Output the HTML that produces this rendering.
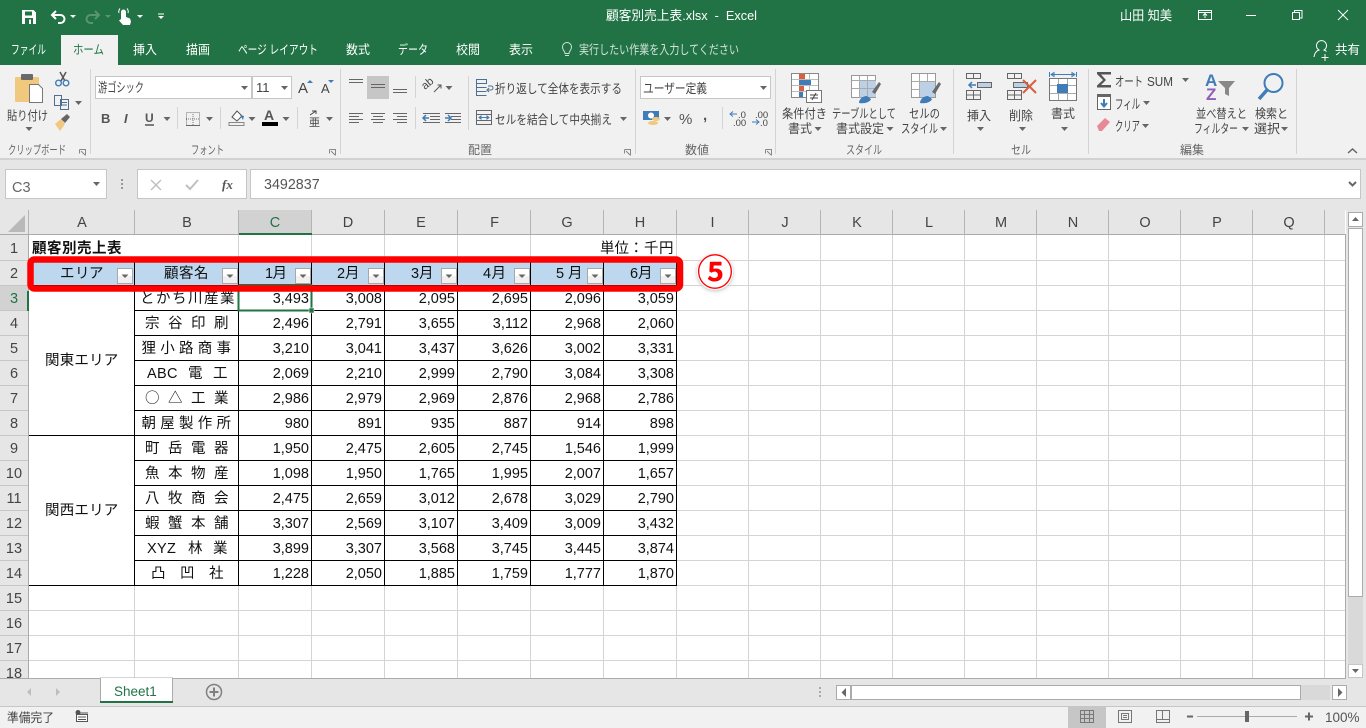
<!DOCTYPE html>
<html lang="ja"><head><meta charset="utf-8"><title>顧客別売上表.xlsx - Excel</title>
<style>
html,body{margin:0;padding:0;width:1366px;height:728px;overflow:hidden;background:#fff}
svg{display:block}
text{font-family:"Liberation Sans","Noto Sans CJK JP",sans-serif;font-size:12.5px;fill:#444;white-space:pre}
.w text{fill:#fff}
.g text{fill:#666;font-size:12px}
.h text{font-size:14.5px;fill:#444;text-anchor:middle}
.c text{font-size:14.5px;fill:#111}
.n text{font-size:14.5px;fill:#111;text-anchor:end}
</style></head><body>
<svg width="1366" height="728" viewBox="0 0 1366 728" xmlns="http://www.w3.org/2000/svg">
<defs>
<path id="k" d="M-3.5 0h7l-3.500 4z" fill="#666"/>
<path id="kw" d="M-3 0h6l-3 3z" fill="#fff"/>
<g id="f"><rect x=".5" y=".5" width="15" height="15" fill="#f0f0f0" stroke="#a8a8a8"/><rect x="1" y="1" width="14" height="7" fill="#fff"/><path d="M4.500 6.500h7l-3.500 3.500z" fill="#666"/></g>
<filter id="sh" x="-30%" y="-30%" width="160%" height="160%"><feGaussianBlur stdDeviation="1.500"/></filter>
</defs>

<!-- title + tabs -->
<rect width="1366" height="65" fill="#217346"/>
<rect y="65" width="1366" height="93" fill="#f1f1f1"/>
<rect y="158" width="1366" height="2" fill="#d2d2d2"/>
<rect y="160" width="1366" height="50" fill="#e6e6e6"/>
<rect x="61" y="35" width="57" height="30" fill="#f1f1f1"/>

<!-- QAT -->
<path d="M22 10h11.500l2.500 2.500V24H22z" fill="#fff"/><rect x="25" y="11.500" width="7" height="4" fill="#217346"/><rect x="25" y="18" width="8" height="6" fill="#217346"/><rect x="29" y="19.500" width="2" height="4.500" fill="#fff"/>
<path d="M56 11l-4 4 4 4M52 15h8.500a4 4 0 0 1 0 8H58" fill="none" stroke="#fff" stroke-width="2"/>
<use href="#kw" x="73" y="15"/>
<path d="M95 11l4 4-4 4M99 15h-8.500a4 4 0 0 0 0 8H93" fill="none" stroke="#5a9475" stroke-width="2"/>
<path d="M105 15h6l-3 3z" fill="#5a9475"/>
<path d="M121 19v-7a2.500 2.500 0 0 1 5 0v5l4 1.500 1 3-1 3.500h-7l-4-4.500z" fill="#fff"/><path d="M119 13a4.500 4.500 0 0 1 1-4.500M128 13a4.500 4.500 0 0 0-1-4.500" fill="none" stroke="#fff"/>
<use href="#kw" x="140" y="15"/>
<path d="M158 14h6" stroke="#fff"/><use href="#kw" x="161" y="16"/>

<g class="w">
<text x="606" y="20" style="font-size:13px" textLength="151" lengthAdjust="spacingAndGlyphs">顧客別売上表.xlsx  -  Excel</text>
<text x="1120" y="20" style="font-size:13px" textLength="52" lengthAdjust="spacingAndGlyphs">山田 知美</text>
<text x="11" y="54" textLength="35" lengthAdjust="spacingAndGlyphs">ファイル</text>
<text x="133" y="54" textLength="24" lengthAdjust="spacingAndGlyphs">挿入</text>
<text x="186" y="54" textLength="24" lengthAdjust="spacingAndGlyphs">描画</text>
<text x="238" y="54" textLength="80" lengthAdjust="spacingAndGlyphs">ページ レイアウト</text>
<text x="346" y="54" textLength="24" lengthAdjust="spacingAndGlyphs">数式</text>
<text x="398" y="54" textLength="30" lengthAdjust="spacingAndGlyphs">データ</text>
<text x="456" y="54" textLength="24" lengthAdjust="spacingAndGlyphs">校閲</text>
<text x="509" y="54" textLength="24" lengthAdjust="spacingAndGlyphs">表示</text>
<text x="1335" y="54" textLength="25" lengthAdjust="spacingAndGlyphs">共有</text>
</g>
<text x="73" y="54" textLength="31" lengthAdjust="spacingAndGlyphs" style="fill:#217346">ホーム</text>
<text x="579" y="54" textLength="160" lengthAdjust="spacingAndGlyphs" style="fill:#d3e3da">実行したい作業を入力してください</text>
<path d="M565 53.500c0-2.500-2.500-3-2.500-6.500a4.500 4.500 0 0 1 9 0c0 3.500-2.500 4-2.500 6.500zM565 55.500h4" fill="none" stroke="#d3e3da"/>
<!-- window buttons -->
<path d="M1198.500 10.500h13v9h-13zM1198.500 12.500h13M1205 18v-4M1203 15.500l2-2 2 2" fill="none" stroke="#fff"/>
<path d="M1246 15.500h10" stroke="#fff"/>
<path d="M1292.500 12.500h7v7h-7zM1294.500 12.500v-2h7.500v7.500h-2.500" fill="none" stroke="#fff"/>
<path d="M1338 10l10 10M1348 10l-10 10" stroke="#fff" fill="none"/>
<path d="M1314 57c.5-4 2-6 5-7a5 5 0 1 1 5 0c1 .3 1.800.8 2.500 1.500M1325 54v7M1321.500 57.500h7" fill="none" stroke="#fff"/>

<!-- ribbon separators -->
<path d="M90.500 69v85M340.500 69v85M635.500 69v85M775.500 69v85M953.500 69v85M1088.500 69v85M1296.500 69v85" stroke="#d4d4d4"/>
<path d="M177.500 107v22M220.500 107v22M297.500 107v22M415.500 76v22M415.500 107v22M468.500 76v54M722.500 107v22" stroke="#d4d4d4"/>

<!-- clipboard -->
<rect x="15" y="77" width="24" height="25" rx="1" fill="#f0c87e"/><rect x="21" y="74" width="12" height="6" rx="1" fill="#6a6a6a"/><path d="M29.500 84.500h9l4 4v14h-13z" fill="#fff" stroke="#777"/>
<path d="M60 72l5 9M66 72l-5 9" stroke="#555" stroke-width="1.500" fill="none"/><circle cx="58.500" cy="83" r="2.800" fill="none" stroke="#3f7cb8" stroke-width="1.400"/><circle cx="66" cy="83" r="2.800" fill="none" stroke="#3f7cb8" stroke-width="1.400"/>
<path d="M54.500 95.500h7v10h-7zM60.500 99.500h8v10h-8zM62 102.500h5M62 105h5" fill="#f1f1f1" stroke="#4f6f90"/><use href="#k" x="78.500" y="101"/>
<path d="M55 124l6-5 4 5-5 7z" fill="#f0c87e"/><path d="M61 119l6-5 3 3-5 6z" fill="#666"/>
<text x="7" y="120" textLength="41" lengthAdjust="spacingAndGlyphs">貼り付け</text><use href="#k" x="29" y="127"/>
<g class="g"><text x="8" y="154" textLength="58" lengthAdjust="spacingAndGlyphs">クリップボード</text>
<text x="191" y="154" textLength="33" lengthAdjust="spacingAndGlyphs">フォント</text>
<text x="468" y="154" textLength="24" lengthAdjust="spacingAndGlyphs">配置</text>
<text x="685" y="154" textLength="24" lengthAdjust="spacingAndGlyphs">数値</text>
<text x="846" y="154" textLength="36" lengthAdjust="spacingAndGlyphs">スタイル</text>
<text x="1011" y="154" textLength="20" lengthAdjust="spacingAndGlyphs">セル</text>
<text x="1180" y="154" textLength="24" lengthAdjust="spacingAndGlyphs">編集</text></g>
<path d="M79.500 149.500h6v6M79.500 149.500v4M81 151l4 4" fill="none" stroke="#888"/><path d="M329.500 149.500h6v6M329.500 149.500v4M331 151l4 4" fill="none" stroke="#888"/><path d="M624.500 149.500h6v6M624.500 149.500v4M626 151l4 4" fill="none" stroke="#888"/><path d="M765.500 149.500h6v6M765.500 149.500v4M767 151l4 4" fill="none" stroke="#888"/>

<!-- font -->
<rect x="95.500" y="76.500" width="156" height="22" fill="#fff" stroke="#c6c6c6"/><rect x="252.500" y="76.500" width="39" height="22" fill="#fff" stroke="#c6c6c6"/>
<text x="98" y="92" style="font-size:13px" textLength="46" lengthAdjust="spacingAndGlyphs">游ゴシック</text><use href="#k" x="244.500" y="86"/>
<text x="256" y="92" style="font-size:13px">11</text><use href="#k" x="284.500" y="86"/>
<text x="298" y="93" style="font-size:15px">A</text><path d="M307 83h6l-3-3z" fill="#3f7cb8"/>
<text x="321" y="93" style="font-size:13px">A</text><path d="M328 80h6l-3 3z" fill="#3f7cb8"/>
<text x="101" y="123" style="font-weight:700;font-size:13px;fill:#555">B</text>
<text x="124" y="123" style="font-style:italic;font-size:13px;font-weight:700;fill:#555">I</text>
<text x="145" y="122" style="font-weight:700;font-size:12px;fill:#555">U</text><path d="M145 125h9" stroke="#555" stroke-width="1.500"/><use href="#k" x="167" y="117"/>
<path d="M186.500 112.500h13v13h-13zM193 112v14M186 119h14" fill="none" stroke="#777" stroke-dasharray="1 1"/><path d="M186 125.500h14" stroke="#666"/><use href="#k" x="209.500" y="117"/>
<path d="M229 122.500h15v3h-15z" fill="none" stroke="#888"/><path d="M232 117l5-6 5 5-5 5z" fill="#fff" stroke="#555"/><path d="M240 115l4 1-1 4z" fill="#3f7cb8"/><use href="#k" x="252" y="117"/>
<text x="264" y="120" style="font-weight:700;font-size:14px;fill:#555">A</text><rect x="262" y="122" width="16" height="4" fill="#000"/><use href="#k" x="286" y="117"/>
<text x="309" y="126" style="font-size:11px">亜</text><path d="M310 115l6-4M312 111h4v3" fill="none" stroke="#444"/><use href="#k" x="329.500" y="117"/>

<!-- alignment -->
<rect x="367" y="76" width="22" height="23" fill="#c6c6c6"/>
<path d="M349 79.500h14M349 82.500h14M371 84.500h14M371 87.500h14M393 89.500h14M393 92.500h14M349 113.500h14M349 116.500h10M349 119.500h14M349 122.500h10M371 113.500h14M373 116.500h10M371 119.500h14M373 122.500h10M393 113.500h14M397 116.500h10M393 119.500h14M397 122.500h10" stroke="#666" fill="none"/>
<text transform="translate(425 90) rotate(-40)" style="font-size:11px">ab</text><path d="M434 92l7-7m-3.500 0h3.500v3.500" fill="none" stroke="#555"/><use href="#k" x="449" y="86"/>
<path d="M423 113.500h17M430 116.500h10M430 119.500h10M423 122.500h17M445 113.500h16M451 116.500h10M451 119.500h10M445 122.500h16" stroke="#666"/><path d="M429 118h-6m3-3l-3 3 3 3M445 118h6m-3-3l3 3-3 3" stroke="#3f7cb8" fill="none" stroke-width="1.500"/>
<path d="M476.500 79.500h10v4h-10zM476.500 87.500h10M476.500 91.500h10M476.500 79.500v16h10M488 86h3a2 2 0 0 1 0 4h-4m2-2l-2 2 2 2" stroke="#4f6f90" fill="none"/>
<text x="495" y="93" textLength="127" lengthAdjust="spacingAndGlyphs">折り返して全体を表示する</text>
<path d="M476.500 110.500h15v14h-15zM476.500 114.500h15M476.500 120.500h15" stroke="#666" fill="none"/><path d="M479 117.500h10M479 117.500l2-1.500v3zM489 117.500l-2-1.500v3z" stroke="#3f7cb8" fill="none"/>
<text x="495" y="124" textLength="117" lengthAdjust="spacingAndGlyphs">セルを結合して中央揃え</text><use href="#k" x="623.500" y="117"/>

<!-- number -->
<rect x="640.500" y="76.500" width="130" height="22" fill="#fff" stroke="#c6c6c6"/>
<text x="643" y="93" style="font-size:13px" textLength="64" lengthAdjust="spacingAndGlyphs">ユーザー定義</text><use href="#k" x="763.500" y="86"/>
<rect x="643" y="111" width="16" height="9" fill="#3f7cb8"/><circle cx="651" cy="115.500" r="3" fill="#fff"/><ellipse cx="653" cy="123" rx="5" ry="2" fill="#f0c87e"/><ellipse cx="656" cy="119" rx="4" ry="2" fill="#f0c87e"/><use href="#k" x="667.500" y="117"/>
<text x="679" y="124" style="font-size:15px;fill:#555">%</text>
<text x="703" y="120" style="font-size:15px;font-weight:700;fill:#555">,</text>
<text x="738" y="118" style="font-size:9.500px">.0</text><text x="733" y="126" style="font-size:9.500px">.00</text><path d="M737 114h-7m3-2.500l-3 2.500 3 2.500" stroke="#3f7cb8" fill="none"/>
<text x="755" y="118" style="font-size:9.500px">.00</text><text x="760" y="126" style="font-size:9.500px">.0</text><path d="M752 122h7m-3-2.500l3 2.500-3 2.500" stroke="#3f7cb8" fill="none"/>

<!-- styles -->
<rect x="791.500" y="73.500" width="27" height="24" fill="#fff" stroke="#888"/><path d="M800.500 74v23M809.500 74v23M792 79.500h26M792 85.500h26M792 91.500h26" stroke="#bbb"/><rect x="799" y="74" width="6" height="5" fill="#d85f3f"/><rect x="799" y="80" width="12" height="5" fill="#3f7cb8"/><rect x="799" y="86" width="5" height="5" fill="#d85f3f"/><rect x="799" y="92" width="4" height="5" fill="#3f7cb8"/><rect x="806.500" y="90.500" width="15" height="12" fill="#fff" stroke="#777"/><path d="M810 95h8M810 98h8M816 93l-4 7" stroke="#444" fill="none"/>
<rect x="851.500" y="75.500" width="24" height="22" fill="#fff" stroke="#999"/><rect x="859" y="80" width="17" height="17" fill="#bcd0e6"/><path d="M859.500 76v22M867.500 76v22M852 80.500h24M852 88.500h24" stroke="#aaa"/><path d="M872 92l7-10 2 2-6 10z" fill="#6a6a6a"/><path d="M859 103c0-4 4-7 8-7l4 3c-1 3-6 5-12 4z" fill="#3f7cb8"/>
<rect x="911.500" y="73.500" width="24" height="24" fill="#fff" stroke="#999"/><path d="M919.500 74v23M927.500 74v23M912 81.500h23M912 89.500h23" stroke="#aaa"/><rect x="920" y="82" width="15" height="15" fill="#bcd0e6"/><path d="M932 92l7-10 2 2-6 10z" fill="#6a6a6a"/><path d="M920 103c0-4 4-7 8-7l4 3c-1 3-6 5-12 4z" fill="#3f7cb8"/>
<text x="782" y="118" textLength="45" lengthAdjust="spacingAndGlyphs">条件付き</text>
<text x="788" y="133" textLength="24" lengthAdjust="spacingAndGlyphs">書式</text><use href="#k" x="818" y="127"/>
<text x="832" y="118" textLength="64" lengthAdjust="spacingAndGlyphs">テーブルとして</text>
<text x="836" y="133" textLength="48" lengthAdjust="spacingAndGlyphs">書式設定</text><use href="#k" x="890" y="127"/>
<text x="909" y="118" textLength="31" lengthAdjust="spacingAndGlyphs">セルの</text>
<text x="901" y="133" textLength="37" lengthAdjust="spacingAndGlyphs">スタイル</text><use href="#k" x="943.500" y="127"/>

<!-- cells -->
<path d="M966.500 73.500h14v5h-14zM973.500 74v5M977.500 82.500h14v5h-14zM984.500 83v4M966.500 90.500h14v9h-14zM966.500 95h14M973.500 91v8" fill="none" stroke="#666"/><rect x="978" y="83" width="13" height="4" fill="#bcd0e6"/><path d="M976 85h-7m3-3l-3 3 3 3" fill="none" stroke="#3f7cb8" stroke-width="1.500"/>
<path d="M1007.500 73.500h14v5h-14zM1014.500 74v5M1013.500 82.500h14v5h-14zM1007.500 90.500h14v9h-14zM1007.500 95h14M1014.500 91v8" fill="none" stroke="#666"/><rect x="1014" y="83" width="13" height="4" fill="#bcd0e6"/><path d="M1023 80l13 13M1036 80l-13 13" stroke="#d85f3f" stroke-width="2"/>
<rect x="1049.500" y="78.500" width="27" height="22" fill="#fff" stroke="#777"/><path d="M1058.500 79v21M1067.500 79v21M1050 85.500h26M1050 93.500h26" stroke="#aaa"/><rect x="1057" y="84" width="11" height="9" fill="#3f7cb8"/><path d="M1049.500 72v5M1076.500 72v5M1051 74.500h24M1051 74.500l3-2v4zM1075 74.500l-3-2v4z" stroke="#3f7cb8" fill="none"/>
<text x="967" y="120" textLength="24" lengthAdjust="spacingAndGlyphs">挿入</text><use href="#k" x="980.500" y="127"/>
<text x="1009" y="120" textLength="24" lengthAdjust="spacingAndGlyphs">削除</text><use href="#k" x="1022.500" y="127"/>
<text x="1051" y="118" textLength="24" lengthAdjust="spacingAndGlyphs">書式</text><use href="#k" x="1064.500" y="127"/>

<!-- edit -->
<path d="M1097 72h14v2.500h-10l5 5.500-5 5h10v2.500h-14v-2l6-5.500-6-6z" fill="#555"/>
<text x="1115" y="86" style="font-size:13px" textLength="28" lengthAdjust="spacingAndGlyphs">オート</text><text x="1147" y="86" style="font-size:13px" textLength="26" lengthAdjust="spacingAndGlyphs">SUM</text><use href="#k" x="1185.500" y="78"/>
<rect x="1097.500" y="94.500" width="13" height="15" fill="#fff" stroke="#666"/><rect x="1097" y="94" width="14" height="3" fill="#666"/><path d="M1104 99v7m-3-3l3 3.500 3-3.500" fill="none" stroke="#3f7cb8" stroke-width="2"/>
<text x="1115" y="109" style="font-size:13.500px" textLength="25" lengthAdjust="spacingAndGlyphs">フィル</text><use href="#k" x="1146.500" y="101"/>
<path d="M1097 126l8-8 5 4-8 9h-3z" fill="#e8899a"/>
<text x="1115" y="131" style="font-size:13.500px" textLength="25" lengthAdjust="spacingAndGlyphs">クリア</text><use href="#k" x="1145.500" y="124"/>
<text x="1205" y="86" style="font-size:17px;font-weight:700;fill:#3f7cb8">A</text><text x="1206" y="100" style="font-size:17px;font-weight:700;fill:#8f5fb5">Z</text>
<path d="M1218 81h17l-6 7v8l-4-2v-6z" fill="#888"/>
<circle cx="1273.500" cy="83" r="9" fill="#f1f1f1" stroke="#3f7cb8" stroke-width="2"/><path d="M1267 90l-8 9" stroke="#3f7cb8" stroke-width="3.500"/>
<text x="1196" y="118" textLength="51" lengthAdjust="spacingAndGlyphs">並べ替えと</text>
<text x="1194" y="133" textLength="44" lengthAdjust="spacingAndGlyphs">フィルター</text><use href="#k" x="1245.500" y="127"/>
<text x="1255" y="118" textLength="33" lengthAdjust="spacingAndGlyphs">検索と</text>
<text x="1254" y="133" textLength="26" lengthAdjust="spacingAndGlyphs">選択</text><use href="#k" x="1284.500" y="127"/>
<path d="M1348 153l4.500-4 4.500 4" fill="none" stroke="#666" stroke-width="1.500"/>

<!-- formula bar -->
<rect x="5.500" y="169.500" width="101" height="29" fill="#fff" stroke="#c6c6c6"/>
<text x="12" y="192" style="font-size:14.500px;fill:#666">C3</text><use href="#k" x="96.500" y="182"/>
<path d="M122 179v2M122 183v2M122 187v2" stroke="#999" stroke-width="2"/>
<rect x="137.500" y="169.500" width="109" height="29" fill="#fff" stroke="#c6c6c6"/>
<path d="M151 180l10 10M161 180l-10 10" stroke="#c0c0c0" stroke-width="1.500"/>
<path d="M186 185l4 4 8-9" fill="none" stroke="#c0c0c0" stroke-width="2"/>
<text x="222" y="189" style="font:italic 700 13px 'Liberation Serif',serif;fill:#555">fx</text>
<rect x="250.500" y="169.500" width="1110" height="29" fill="#fff" stroke="#c6c6c6"/>
<text x="264" y="189" style="font-size:14.300px;fill:#555">3492837</text>
<path d="M1349 182l3.500 3.500 3.500-3.500" fill="none" stroke="#666" stroke-width="2"/>

<!-- headers -->
<rect y="210" width="1345" height="25" fill="#e6e6e6"/>
<rect y="235" width="28" height="443" fill="#e6e6e6"/>
<rect x="239" y="210" width="73" height="25" fill="#d2d2d2"/>
<rect y="286" width="28" height="25" fill="#d2d2d2"/>
<path d="M8 232l17-17v17z" fill="#b9b9b9"/>
<path d="M28.500 210v25M134.500 210v25M238.500 210v25M311.500 210v25M384.500 210v25M457.500 210v25M530.500 210v25M603.500 210v25M676.500 210v25M748.500 210v25M820.500 210v25M892.500 210v25M964.500 210v25M1036.500 210v25M1108.500 210v25M1180.500 210v25M1252.500 210v25M1324.500 210v25" stroke="#b4b4b4"/>
<path d="M0 260.500h28M0 285.500h28M0 310.500h28M0 335.500h28M0 360.500h28M0 385.500h28M0 410.500h28M0 435.500h28M0 460.500h28M0 485.500h28M0 510.500h28M0 535.500h28M0 560.500h28M0 585.500h28M0 610.500h28M0 635.500h28M0 660.500h28" stroke="#c6c6c6"/>
<g class="h"><text x="82" y="227">A</text><text x="187" y="227">B</text><text x="275" y="227" style="fill:#217346">C</text><text x="348" y="227">D</text><text x="421" y="227">E</text><text x="494.500" y="227">F</text><text x="567" y="227">G</text><text x="640" y="227">H</text><text x="712.500" y="227">I</text><text x="785" y="227">J</text><text x="857" y="227">K</text><text x="929" y="227">L</text><text x="1001" y="227">M</text><text x="1073" y="227">N</text><text x="1145" y="227">O</text><text x="1217" y="227">P</text><text x="1289" y="227">Q</text>
<text x="14" y="253">1</text><text x="14" y="278">2</text><text x="14" y="303" style="fill:#217346">3</text><text x="14" y="328">4</text><text x="14" y="353">5</text><text x="14" y="378">6</text><text x="14" y="403">7</text><text x="14" y="428">8</text><text x="14" y="453">9</text><text x="14" y="478">10</text><text x="14" y="503">11</text><text x="14" y="528">12</text><text x="14" y="553">13</text><text x="14" y="578">14</text><text x="14" y="603">15</text><text x="14" y="628">16</text><text x="14" y="653">17</text><text x="14" y="678">18</text></g>

<!-- grid -->
<rect x="29" y="235" width="1316" height="443" fill="#fff"/>
<path d="M29 260.500H1345M29 285.500H1345M29 310.500H1345M29 335.500H1345M29 360.500H1345M29 385.500H1345M29 410.500H1345M29 435.500H1345M29 460.500H1345M29 485.500H1345M29 510.500H1345M29 535.500H1345M29 560.500H1345M29 585.500H1345M29 610.500H1345M29 635.500H1345M29 660.500H1345" stroke="#d4d4d4"/>
<path d="M134.500 260V678M238.500 235V678M311.500 235V678M384.500 235V678M457.500 235V678M530.500 235V678M603.500 260V678M676.500 235V678M748.500 235V678M820.500 235V678M892.500 235V678M964.500 235V678M1036.500 235V678M1108.500 235V678M1180.500 235V678M1252.500 235V678M1324.500 235V678" stroke="#d4d4d4"/>
<rect x="29" y="286" width="105" height="149" fill="#fff"/><rect x="29" y="436" width="105" height="149" fill="#fff"/>
<rect x="29" y="261" width="647" height="24" fill="#bdd7ee"/>
<path d="M134.500 261V585M238.500 261V585M311.500 261V585M384.500 261V585M457.500 261V585M530.500 261V585M603.500 261V585M676.500 261V585" stroke="#000"/>
<path d="M29 285.500H677M134 310.500H677M134 335.500H677M134 360.500H677M134 385.500H677M134 410.500H677M29 435.500H677M134 460.500H677M134 485.500H677M134 510.500H677M134 535.500H677M134 560.500H677M29 585.500H677" stroke="#000"/>
<path d="M28.500 235V678M0 234.500H1345M1345.500 234V679M29 678.500H1345" stroke="#ababab"/>
<rect x="239" y="233" width="73" height="2" fill="#217346"/>
<rect x="27" y="291" width="2" height="20" fill="#217346"/>

<!-- text cells -->
<g class="c">
<text x="32 47 62 77 92 107" y="253" style="font-weight:700">顧客別売上表</text>
<text x="600 614.500 629 644 659" y="253">単位：千円</text>
<text x="60 75 89" y="278">エリア</text>
<text x="164 179 194" y="278">顧客名</text>
<text x="265 272.500" y="278">1月</text><text x="337 345" y="278">2月</text><text x="411 419" y="278">3月</text><text x="483 491.500" y="278">4月</text><text x="556 568" y="278">5月</text><text x="630 638" y="278">6月</text>
<text x="45 59.700 74.400 89.100 103.800" y="365">関東エリア</text>
<text x="45 59.700 74.400 89.100 103.800" y="515">関西エリア</text>
<text x="140 156 172 188 204 220" y="303">とかち川産業</text>
<text x="145 168 191 214" y="328">宗谷印刷</text>
<text x="141.500 160.250 179 197.750 216.500" y="353">狸小路商事</text>
<text x="147 157 167 188 213" y="378">ABC電工</text>
<text x="145 168 191 214" y="403" style="font-family:'Noto Sans CJK JP',sans-serif">○△工業</text>
<text x="141.500 160.250 179 197.750 216.500" y="428">朝屋製作所</text>
<text x="145 168 191 214" y="453">町岳電器</text>
<text x="145 168 191 214" y="478">魚本物産</text>
<text x="145 168 191 214" y="503">八牧商会</text>
<text x="145 168 191 214" y="528">蝦蟹本舗</text>
<text x="147 157 167 188 213" y="553">XYZ林業</text>
<text x="151 180 209" y="578">凸凹社</text>
</g>
<g class="n">
<text x="309" y="303">3,493</text><text x="382" y="303">3,008</text><text x="455" y="303">2,095</text><text x="528" y="303">2,695</text><text x="601" y="303">2,096</text><text x="674" y="303">3,059</text>
<text x="309" y="328">2,496</text><text x="382" y="328">2,791</text><text x="455" y="328">3,655</text><text x="528" y="328">3,112</text><text x="601" y="328">2,968</text><text x="674" y="328">2,060</text>
<text x="309" y="353">3,210</text><text x="382" y="353">3,041</text><text x="455" y="353">3,437</text><text x="528" y="353">3,626</text><text x="601" y="353">3,002</text><text x="674" y="353">3,331</text>
<text x="309" y="378">2,069</text><text x="382" y="378">2,210</text><text x="455" y="378">2,999</text><text x="528" y="378">2,790</text><text x="601" y="378">3,084</text><text x="674" y="378">3,308</text>
<text x="309" y="403">2,986</text><text x="382" y="403">2,979</text><text x="455" y="403">2,969</text><text x="528" y="403">2,876</text><text x="601" y="403">2,968</text><text x="674" y="403">2,786</text>
<text x="309" y="428">980</text><text x="382" y="428">891</text><text x="455" y="428">935</text><text x="528" y="428">887</text><text x="601" y="428">914</text><text x="674" y="428">898</text>
<text x="309" y="453">1,950</text><text x="382" y="453">2,475</text><text x="455" y="453">2,605</text><text x="528" y="453">2,745</text><text x="601" y="453">1,546</text><text x="674" y="453">1,999</text>
<text x="309" y="478">1,098</text><text x="382" y="478">1,950</text><text x="455" y="478">1,765</text><text x="528" y="478">1,995</text><text x="601" y="478">2,007</text><text x="674" y="478">1,657</text>
<text x="309" y="503">2,475</text><text x="382" y="503">2,659</text><text x="455" y="503">3,012</text><text x="528" y="503">2,678</text><text x="601" y="503">3,029</text><text x="674" y="503">2,790</text>
<text x="309" y="528">3,307</text><text x="382" y="528">2,569</text><text x="455" y="528">3,107</text><text x="528" y="528">3,409</text><text x="601" y="528">3,009</text><text x="674" y="528">3,432</text>
<text x="309" y="553">3,899</text><text x="382" y="553">3,307</text><text x="455" y="553">3,568</text><text x="528" y="553">3,745</text><text x="601" y="553">3,445</text><text x="674" y="553">3,874</text>
<text x="309" y="578">1,228</text><text x="382" y="578">2,050</text><text x="455" y="578">1,885</text><text x="528" y="578">1,759</text><text x="601" y="578">1,777</text><text x="674" y="578">1,870</text>
</g>

<!-- filter buttons -->
<use href="#f" x="117" y="268"/><use href="#f" x="222" y="268"/><use href="#f" x="295" y="268"/><use href="#f" x="368" y="268"/><use href="#f" x="441" y="268"/><use href="#f" x="514" y="268"/><use href="#f" x="587" y="268"/><use href="#f" x="660" y="268"/>

<!-- selection -->
<rect x="238.500" y="285.500" width="73" height="25" fill="none" stroke="#217346" stroke-width="2"/>
<rect x="309" y="308" width="5" height="5" fill="#217346" stroke="#fff" stroke-width=".5"/>

<!-- red highlight -->
<rect x="30.500" y="259.500" width="649.500" height="29" rx="4" fill="none" stroke="#f00" stroke-width="6.500"/>
<rect x="239" y="284" width="73" height="1" fill="#217346"/>

<!-- circled five -->
<circle cx="715" cy="273" r="18.500" fill="#ccc" filter="url(#sh)"/>
<circle cx="715" cy="272" r="18" fill="#fff"/>
<text x="715" y="285" text-anchor="middle" style="font-size:36px;font-weight:700;fill:#f00;font-family:'Noto Sans CJK JP',sans-serif">⑤</text>

<!-- vertical scrollbar -->
<rect x="1346" y="210" width="20" height="469" fill="#e6e6e6"/>
<rect x="1348" y="228" width="15" height="436" fill="#d9d9d9"/>
<rect x="1348.500" y="212.500" width="14" height="14" fill="#fff" stroke="#ababab"/><path d="M1352 221h7l-3.500-4z" fill="#666"/>
<rect x="1348.500" y="228.500" width="14" height="368" fill="#fff" stroke="#ababab"/>
<rect x="1348.500" y="664.500" width="14" height="13" fill="#fff" stroke="#c6c6c6"/><path d="M1352 669h7l-3.500 4z" fill="#666"/>

<!-- tab bar -->
<rect y="679" width="1366" height="27" fill="#e6e6e6"/>
<path d="M0 678.500H1345" stroke="#ababab"/>
<path d="M31 688v8l-4-4zM56 688v8l4-4z" fill="#bdbdbd"/>
<rect x="100.500" y="678" width="72" height="24" fill="#fff" stroke="#ababab"/><rect x="101" y="678" width="71" height="3" fill="#fff"/><rect x="100" y="701" width="73" height="2" fill="#217346"/>
<text x="114" y="696" style="font-size:13.500px;fill:#217346">Sheet1</text>
<circle cx="214" cy="692" r="7.500" fill="none" stroke="#808080" stroke-width="1.500"/><path d="M209.500 692h9M214 687.500v9" stroke="#808080" stroke-width="2"/>
<path d="M820 687v2M820 691v2M820 695v2" stroke="#aaa" stroke-width="2"/>
<rect x="836.500" y="685.500" width="14" height="14" fill="#fff" stroke="#ababab"/><path d="M846 688v9l-4.500-4.500z" fill="#666"/>
<rect x="851" y="685" width="479" height="15" fill="#d9d9d9"/>
<rect x="851.500" y="685.500" width="449" height="14" fill="#fff" stroke="#ababab"/>
<rect x="1332.500" y="685.500" width="14" height="14" fill="#fff" stroke="#ababab"/><path d="M1338 688v9l4.500-4.500z" fill="#666"/>

<!-- status bar -->
<rect y="706" width="1366" height="22" fill="#f1f1f1"/>
<path d="M0 706.500H1366" stroke="#c6c6c6"/>
<text x="7" y="722" textLength="47" lengthAdjust="spacingAndGlyphs">準備完了</text>
<circle cx="78" cy="712.500" r="2.500" fill="#555"/><rect x="76.500" y="714.500" width="11" height="7" fill="#fff" stroke="#555"/><path d="M79 713h9M78 717h8M78 719.500h8" stroke="#555"/>
<rect x="1068" y="707" width="38" height="21" fill="#c6c6c6"/>
<path d="M1080.500 710.500h13v12h-13zM1084.500 710.500v12M1089.500 710.500v12M1080.500 714.500h13M1080.500 718.500h13" fill="none" stroke="#777"/>
<path d="M1118.500 710.500h13v12h-13zM1121.500 713.500h7v6h-7zM1123 715.500h4M1123 717.500h4" fill="none" stroke="#777"/>
<path d="M1156.500 710.500h13v12h-13zM1156.500 719.500h13M1162.500 710.500v9" fill="none" stroke="#777"/>
<path d="M1187 716.500h6" stroke="#666" stroke-width="2"/>
<path d="M1197 716.500h100" stroke="#aaa"/>
<rect x="1245" y="711" width="4" height="11" fill="#666"/>
<path d="M1305 716.500h8M1309 712.500v8" stroke="#666" stroke-width="2"/>
<text x="1325" y="722" style="font-size:13.500px;fill:#555">100%</text>
</svg>
</body></html>
